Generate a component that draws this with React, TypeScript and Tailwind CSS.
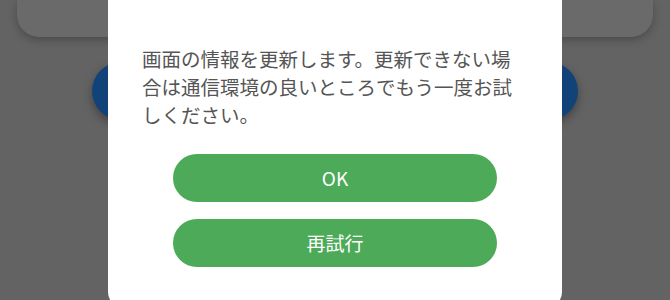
import React from 'react';

const font = { fontFamily: '"Noto Sans CJK JP", "Noto Sans", sans-serif' };

export default function App() {
  return (
    <div
      className="relative h-[300px] w-[670px] overflow-hidden bg-[#636363]"
      style={font}
    >
      {/* dimmed page behind the dialog */}
      <div className="px-[17px]">
        <div className="h-[37px] rounded-b-[22px] bg-[#6a6a6a] shadow-[0_3px_8px_rgba(0,0,0,0.25)]" />
      </div>
      <div className="mx-[92px] mt-[25px] h-[58px] rounded-full bg-[#114379] shadow-[0_4px_10px_rgba(0,0,0,0.35)]" />

      {/* dialog */}
      <div className="absolute left-[108px] top-[-20px] flex h-[328px] w-[454px] flex-col rounded-[16px] bg-white px-[34px] pt-[65px]">
        <p className="text-[19.5px] leading-[28px] text-[#555555]">
          画面の情報を更新します。更新できない場合は通信環境の良いところでもう一度お試しください。
        </p>
        <div className="mt-[25px] flex flex-col items-center gap-[17px]">
          <button className="h-[48px] w-[324px] rounded-full bg-[#4caa58] text-[19px] font-normal text-white">
            OK
          </button>
          <button className="h-[48px] w-[324px] rounded-full bg-[#4caa58] text-[19px] font-normal text-white">
            再試行
          </button>
        </div>
      </div>
    </div>
  );
}
